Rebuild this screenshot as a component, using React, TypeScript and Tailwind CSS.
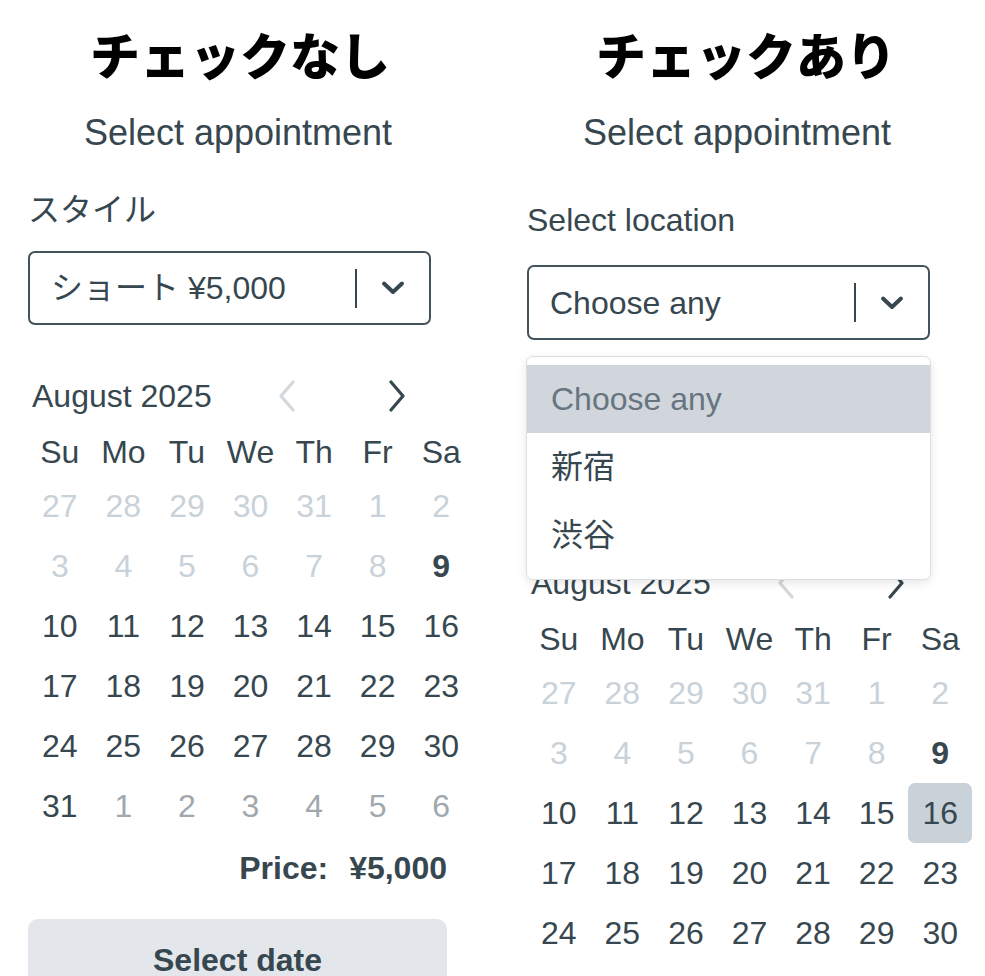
import React from "react";

const weekdays = ["Su", "Mo", "Tu", "We", "Th", "Fr", "Sa"];

// kind: p = past/disabled, t = today, n = normal, x = next month
const weeks: [number, string][][] = [
  [[27, "p"], [28, "p"], [29, "p"], [30, "p"], [31, "p"], [1, "p"], [2, "p"]],
  [[3, "p"], [4, "p"], [5, "p"], [6, "p"], [7, "p"], [8, "p"], [9, "t"]],
  [[10, "n"], [11, "n"], [12, "n"], [13, "n"], [14, "n"], [15, "n"], [16, "n"]],
  [[17, "n"], [18, "n"], [19, "n"], [20, "n"], [21, "n"], [22, "n"], [23, "n"]],
  [[24, "n"], [25, "n"], [26, "n"], [27, "n"], [28, "n"], [29, "n"], [30, "n"]],
  [[31, "n"], [1, "x"], [2, "x"], [3, "x"], [4, "x"], [5, "x"], [6, "x"]],
];

function Chevron({ dir, light }: { dir: "l" | "r"; light?: boolean }) {
  return (
    <svg width="18" height="32" viewBox="0 0 18 32" fill="none">
      <path
        d={dir === "l" ? "M15 2 L3 16 L15 30" : "M3 2 L15 16 L3 30"}
        stroke={light ? "#d3d8dc" : "#37474f"}
        strokeWidth="3.2"
        strokeLinecap="round"
        strokeLinejoin="round"
      />
    </svg>
  );
}

function SelectBox({ value, tall }: { value: string; tall?: boolean }) {
  return (
    <div
      className={`flex items-center w-[403px] border-2 border-[#44545e] rounded-[7px] bg-white ${
        tall ? "h-[75px]" : "h-[74px]"
      }`}
    >
      <span className="flex-1 pl-[21px] text-[32px] text-[#37474f]">{value}</span>
      <span className="w-[2px] h-[39px] bg-[#37474f]" />
      <span className="w-[72px] flex items-center justify-center">
        <svg width="26" height="16" viewBox="0 0 26 16" fill="none">
          <path d="M4 3.5 L13 12 L22 3.5" stroke="#37474f" strokeWidth="4" strokeLinecap="round" strokeLinejoin="round" />
        </svg>
      </span>
    </div>
  );
}

function Calendar({ selected, rows = 6 }: { selected?: number; rows?: number }) {
  return (
    <div>
      <div className="flex items-center h-[40px]">
        <span className="w-[239px] pl-[4px] text-[32px] leading-[40px] text-[#37474f]">August 2025</span>
        <span className="w-[40px] flex justify-center">
          <Chevron dir="l" light />
        </span>
        <span className="w-[70px]" />
        <span className="w-[40px] flex justify-center">
          <Chevron dir="r" />
        </span>
      </div>
      <div className="grid grid-cols-7 w-[445px] mt-[11px]">
        {weekdays.map((d) => (
          <div key={d} className="h-[49px] flex items-center justify-center text-[32px] text-[#37474f]">
            {d}
          </div>
        ))}
        {weeks
          .slice(0, rows)
          .flat()
          .map(([n, k], i) => {
            const isSel = k === "n" && n === selected;
            return (
              <div
                key={i}
                className={`h-[60px] flex items-center justify-center text-[32px] rounded-[7px] ${
                  k === "p"
                    ? "text-[#c9d2d9]"
                    : k === "x"
                    ? "text-[#a1a8ad]"
                    : k === "t"
                    ? "text-[#37474f] font-bold"
                    : "text-[#37474f]"
                } ${isSel ? "bg-[#c9d1d9]" : ""}`}
              >
                {n}
              </div>
            );
          })}
      </div>
    </div>
  );
}

export default function App() {
  return (
    <div className="flex w-[985px] h-[976px] overflow-hidden bg-white font-['Liberation_Sans','Noto_Sans_CJK_JP',sans-serif]">
      {/* without check */}
      <div className="ml-[28px] w-[420px] shrink-0 pt-[25px]">
        <h1 className="h-[56px] leading-[56px] pl-[4px] text-center text-[50px] font-black text-black font-['Noto_Sans_CJK_JP',sans-serif]">
          チェックなし
        </h1>
        <p className="mt-[30px] h-[44px] leading-[44px] text-center text-[36px] text-[#37474f]">Select appointment</p>
        <p className="mt-[35px] h-[40px] leading-[40px] text-[32px] text-[#37474f]">スタイル</p>
        <div className="mt-[21px]">
          <SelectBox value="ショート ¥5,000" />
        </div>
        <div className="mt-[51px]">
          <Calendar />
        </div>
        <div className="mt-[12px] h-[40px] flex items-center justify-end gap-[21px] pr-[1px] text-[32px] font-bold text-[#37474f]">
          <span>Price:</span>
          <span>¥5,000</span>
        </div>
        <button className="mt-[31px] w-[419px] h-[82px] rounded-[10px] bg-[#e3e7eb] text-[32px] font-bold text-[#37474f]">
          Select date
        </button>
      </div>

      {/* with check */}
      <div className="ml-[79px] w-[420px] shrink-0 pt-[25px]">
        <h1 className="h-[56px] leading-[56px] pl-[18px] text-center text-[50px] font-black text-black font-['Noto_Sans_CJK_JP',sans-serif]">
          チェックあり
        </h1>
        <p className="mt-[30px] h-[44px] leading-[44px] text-center text-[36px] text-[#37474f]">Select appointment</p>
        <p className="mt-[45px] h-[40px] leading-[40px] text-[32px] text-[#37474f]">Select location</p>
        <div className="relative mt-[25px]">
          <SelectBox value="Choose any" tall />
          <div className="absolute z-10 left-[-1px] top-[91px] w-[405px] pt-[8px] pb-[10px] bg-white border border-[#dcdfe2] rounded-[7px] shadow-[0_3px_10px_rgba(0,0,0,0.10)]">
            <div className="h-[68px] flex items-center pl-[24px] bg-[#d1d6dd] text-[32px] text-[#66757f]">Choose any</div>
            <div className="h-[68px] flex items-center pl-[24px] text-[32px] text-[#37474f]">新宿</div>
            <div className="h-[68px] flex items-center pl-[24px] text-[32px] text-[#37474f]">渋谷</div>
          </div>
        </div>
        <div className="mt-[223px]">
          <Calendar selected={16} rows={5} />
        </div>
      </div>
    </div>
  );
}
